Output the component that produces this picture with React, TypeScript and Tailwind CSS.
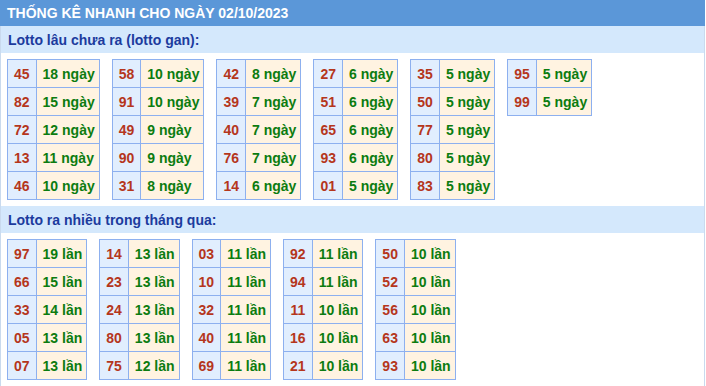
import React from "react";

type Pair = [string, string];

const ganTables: Pair[][] = [
  [["45", "18 ngày"], ["82", "15 ngày"], ["72", "12 ngày"], ["13", "11 ngày"], ["46", "10 ngày"]],
  [["58", "10 ngày"], ["91", "10 ngày"], ["49", "9 ngày"], ["90", "9 ngày"], ["31", "8 ngày"]],
  [["42", "8 ngày"], ["39", "7 ngày"], ["40", "7 ngày"], ["76", "7 ngày"], ["14", "6 ngày"]],
  [["27", "6 ngày"], ["51", "6 ngày"], ["65", "6 ngày"], ["93", "6 ngày"], ["01", "5 ngày"]],
  [["35", "5 ngày"], ["50", "5 ngày"], ["77", "5 ngày"], ["80", "5 ngày"], ["83", "5 ngày"]],
  [["95", "5 ngày"], ["99", "5 ngày"]],
];

const hotTables: Pair[][] = [
  [["97", "19 lần"], ["66", "15 lần"], ["33", "14 lần"], ["05", "13 lần"], ["07", "13 lần"]],
  [["14", "13 lần"], ["23", "13 lần"], ["24", "13 lần"], ["80", "13 lần"], ["75", "12 lần"]],
  [["03", "11 lần"], ["10", "11 lần"], ["32", "11 lần"], ["40", "11 lần"], ["69", "11 lần"]],
  [["92", "11 lần"], ["94", "11 lần"], ["11", "10 lần"], ["16", "10 lần"], ["21", "10 lần"]],
  [["50", "10 lần"], ["52", "10 lần"], ["56", "10 lần"], ["63", "10 lần"], ["93", "10 lần"]],
];

const LottoTable = ({ rows }: { rows: Pair[] }) => (
  <table className="border-collapse self-start">
    <tbody>
      {rows.map(([num, count], index) => (
        <tr key={index} className="h-[28px]">
          <td className="border border-[#8db0ef] bg-[#e1eefe] px-[6px] text-center text-[#b5361c]">
            {num}
          </td>
          <td className="border border-[#8db0ef] bg-[#fff3e1] pr-[4px] pl-[6px] text-left text-[#0c7c10]">
            {count}
          </td>
        </tr>
      ))}
    </tbody>
  </table>
);

const SectionTitle = ({ title }: { title: string }) => (
  <div className="flex h-[27px] items-center bg-[#d4e8fc] pl-[7px] text-[#1c3b9e]">{title}</div>
);

const App = () => {
  return (
    <div
      className="h-[386px] w-[705px] border-r border-l border-[#c9daee] bg-white text-[14px] leading-none font-bold"
      style={{ fontFamily: '"Liberation Sans", Arial, sans-serif' }}
    >
      <div className="-mx-px flex h-[26px] items-center bg-[#5b97d8] pl-[7px] text-white">
        THỐNG KÊ NHANH CHO NGÀY 02/10/2023
      </div>
      <SectionTitle title="Lotto lâu chưa ra (lotto gan):" />
      <div className="flex gap-x-[12px] px-[6px] pt-[6px] pb-[6px]">
        {ganTables.map((rows, index) => (
          <LottoTable key={index} rows={rows} />
        ))}
      </div>
      <SectionTitle title="Lotto ra nhiều trong tháng qua:" />
      <div className="flex gap-x-[12px] px-[6px] pt-[6px]">
        {hotTables.map((rows, index) => (
          <LottoTable key={index} rows={rows} />
        ))}
      </div>
    </div>
  );
};

export default App;
